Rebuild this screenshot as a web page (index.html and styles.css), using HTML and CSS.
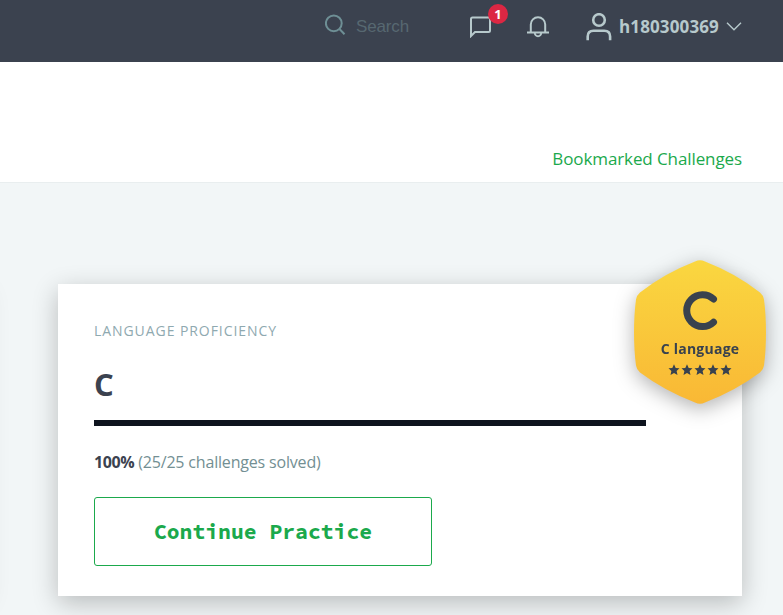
FILE: index.html
```html
<!DOCTYPE html>
<html lang="en">
<head>
<meta charset="utf-8">
<title>Language Proficiency</title>
<link rel="stylesheet" href="styles.css">
</head>
<body>
<header class="topbar">
  <label class="search">
    <svg class="search-icon" width="22" height="22" viewBox="0 0 22 22"><circle cx="8.800" cy="9.300" r="7.900"/><path d="M14.500 15l5 5.200"/></svg>
    <input class="search-input" type="text" placeholder="Search">
  </label>
  <a class="messages">
    <svg width="22" height="22" viewBox="0 0 22 22"><path d="M1 20V3Q1 1.500 2.500 1.500H18.500Q20 1.500 20 3V14.500Q20 16 18.500 16H5Z"/></svg>
    <span class="count">1</span>
  </a>
  <a class="alerts">
    <svg width="22" height="22" viewBox="0 0 22 22"><path d="M0 16.500H22M3.800 16.500V8.500a7.200 7.200 0 0 1 14.400 0V16.500M7.700 16.500a3.300 3.800 0 0 0 6.600 0"/></svg>
  </a>
  <a class="account">
    <svg class="person" width="26" height="28" viewBox="0 0 26 28"><circle cx="13" cy="7" r="5.800"/><path d="M1.700 27.200V23.500Q1.700 17.700 7.500 17.700H18.300Q24.100 17.700 24.100 23.500V27.200"/></svg>
    <span class="username">h180300369</span>
    <svg class="chevron" width="16" height="9" viewBox="0 0 16 9"><path d="M1 .8L8 7.700L15 .8"/></svg>
  </a>
</header>
<nav class="subnav"><a class="bookmarks">Bookmarked Challenges</a></nav>
<main class="cards">
  <div class="card card-previous"></div>
  <section class="card proficiency">
    <h2 class="eyebrow">LANGUAGE PROFICIENCY</h2>
    <h1 class="language">C</h1>
    <div class="progress"></div>
    <p class="solved"><strong>100%</strong> (25/25 challenges solved)</p>
    <button class="practice">Continue Practice</button>
    <svg class="badge" width="132" height="146" viewBox="0 0 132 146">
      <defs>
        <linearGradient id="gold" x1="0" y1="0" x2="0" y2="1"><stop offset="0" stop-color="#fad740"/><stop offset="1" stop-color="#f9b835"/></linearGradient>
        <path id="star" d="M0-5.700L1.700-1.900L5.500-1.700L2.600 1.100L3.500 5L0 3L-3.500 5L-2.600 1.100L-5.500-1.700L-1.700-1.900Z"/>
      </defs>
      <path fill="url(#gold)" d="M61 2.500Q66 0 71 2.500Q102 14.500 126 33.500Q129.500 36.500 130 40.500Q132 55.500 132 73.500Q132 91.500 130 106.500Q129.500 110.500 126 113.500Q102 131.500 71 143.500Q66 146 61 143.500Q30 131.500 6 113.500Q2.500 110.500 2 106.500Q0 91.500 0 73.500Q0 55.500 2 40.500Q2.500 36.500 6 33.500Q30 14.500 61 2.500Z"/>
      <path class="badge-mark" d="M79.500 40A15.900 15.900 0 1 0 79.500 63.200"/>
      <text class="badge-name" x="66" y="95">C language</text>
      <g class="stars"><use href="#star" x="40" y="111"/><use href="#star" x="53" y="111"/><use href="#star" x="66" y="111"/><use href="#star" x="79" y="111"/><use href="#star" x="92" y="111"/></g>
    </svg>
  </section>
</main>
</body>
</html>
```
FILE: styles.css
```css
* { box-sizing: border-box; }
body {
  margin: 0;
  height: 615px;
  overflow: hidden;
  background: #f2f6f7;
  font-family: "Open Sans", "Noto Sans", sans-serif;
}
svg { display: block; flex: none; fill: none; stroke: #b7c9cc; stroke-width: 2; }
.topbar {
  height: 62px;
  padding: 0 41px 9px 325px;
  display: flex;
  align-items: center;
  background: #3b424f;
}
.search { display: flex; align-items: center; gap: 9px; width: 144px; }
.search-icon { stroke: #6e8f95; margin-top: -3px; }
.search-input {
  width: 100px;
  padding: 0;
  border: 0;
  outline: 0;
  background: none;
  font: 17px "Liberation Sans", Arial, sans-serif;
  letter-spacing: -.15px;
}
.search-input::placeholder { color: #576871; opacity: 1; }
.messages { position: relative; margin-left: 1px; }
.count {
  position: absolute;
  left: 18px;
  top: -12px;
  width: 20px;
  height: 20px;
  border-radius: 50%;
  background: #dc2743;
  color: #fff;
  font-weight: 700;
  font-size: 13px;
  line-height: 20px;
  text-align: center;
}
.alerts { margin-left: 35px; }
.account { display: flex; align-items: center; margin-left: 37px; }
.person { stroke-width: 2.6; }
.username {
  margin-left: 7px;
  color: #b7c9cc;
  font-weight: 700;
  font-size: 17px;
  line-height: 24px;
  letter-spacing: .13px;
}
.chevron { margin-left: 7px; stroke-width: 1.4; }
.subnav {
  height: 121px;
  padding: 0 41px 10px;
  display: flex;
  justify-content: flex-end;
  align-items: flex-end;
  background: #fff;
  border-bottom: 1px solid #e9eeef;
}
.bookmarks { color: #1ba94c; font-size: 17px; line-height: 26px; letter-spacing: -.1px; }
.cards {
  display: grid;
  grid-template-columns: 684px 684px;
  column-gap: 72px;
  margin-left: -698px;
  padding-top: 101px;
}
.card {
  height: 312px;
  background: #fff;
  box-shadow: 0 7px 24px rgba(0, 0, 0, .24);
}
.card-previous { box-shadow: 0 7px 24px rgba(0, 0, 0, .12); }
.proficiency { position: relative; padding: 36px; }
.eyebrow {
  margin: 0;
  color: #8fa9b0;
  font-weight: 400;
  font-size: 14px;
  line-height: 22px;
  letter-spacing: .93px;
}
.language { margin: 20px 0 0; color: #3b424f; font-size: 31px; line-height: 44px; }
.progress { width: 552px; height: 6px; margin-top: 14px; background: #0e141e; }
.solved {
  margin: 24px 0 0;
  color: #738f93;
  font-size: 16px;
  line-height: 24px;
  letter-spacing: -.18px;
}
.solved strong { color: #3b424f; letter-spacing: -.4px; }
.practice {
  display: block;
  width: 338px;
  height: 69px;
  margin-top: 23px;
  padding: 0;
  border: 1px solid #1ba94c;
  border-radius: 3px;
  background: #fff;
  color: #1ba94c;
  font: 700 21.400px "Source Code Pro", "Noto Sans Mono CJK SC", "DejaVu Sans Mono", monospace;
}
.badge {
  position: absolute;
  top: -25px;
  right: -24px;
  overflow: visible;
  stroke: none;
  filter: drop-shadow(0 5px 10px rgba(0, 0, 0, .3));
}
.badge-mark { stroke: #39424e; stroke-width: 7; stroke-linecap: round; }
.badge-name { fill: #39424e; font-weight: 700; font-size: 14px; letter-spacing: .25px; text-anchor: middle; }
.stars { fill: #39424e; }
```
